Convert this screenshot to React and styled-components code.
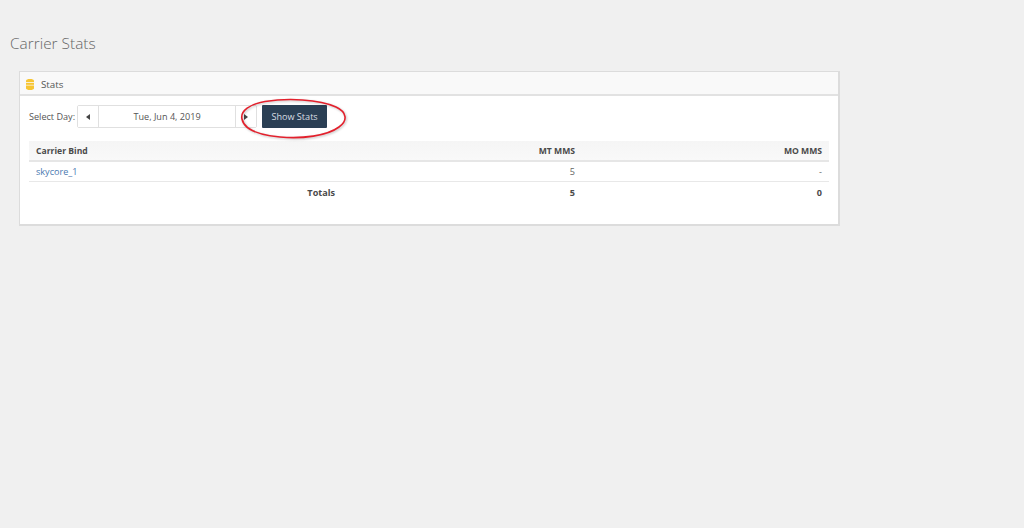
import React from 'react';
import styled, { createGlobalStyle } from 'styled-components';

const GlobalStyle = createGlobalStyle`
  html, body {
    margin: 0;
    height: 100%;
    background: #f0f0f0;
    font-family: "Open Sans", "Liberation Sans", sans-serif;
    font-size: 9.1px;
    color: #555;
    overflow: hidden;
  }
`;

const Page = styled.div`
  padding: 34px 0 0 10px;
`;

const PageTitle = styled.h1`
  margin: 0 0 17px;
  font-size: 15.4px;
  line-height: 20px;
  font-weight: 300;
  color: #666;
`;

const Panel = styled.section`
  position: relative;
  width: 818px;
  margin-left: 9px;
  height: 152px;
  background: #fff;
  border: 2px solid #dcdcdc;
  border-width: 1px 2px 2px 1px;
  box-sizing: content-box;
`;

const PanelHeader = styled.header`
  display: flex;
  align-items: center;
  gap: 7px;
  height: 20px;
  padding: 2px 0 0 6px;
  box-sizing: content-box;
  background: #f9f9f9;
  border-bottom: 2px solid #e2e2e2;
  font-size: 9.8px;
  color: #555;
`;

const PanelBody = styled.div`
  padding: 9px 9px 0;
`;

const Toolbar = styled.div`
  display: flex;
  align-items: center;
  height: 23px;
`;

const FieldLabel = styled.label`
  margin-right: 2px;
  color: #555;
`;

const DatePicker = styled.div`
  display: flex;
  height: 21px;
  border: 1px solid #e0e0e0;
  border-radius: 2px;
  margin-right: 5px;
`;

const Arrow = styled.button`
  display: flex;
  align-items: center;
  justify-content: center;
  width: 21px;
  padding: 0;
  background: #fff;
  border: 0;
  border-${p => (p.$side === 'left' ? 'right' : 'left')}: 1px solid #e0e0e0;
`;

const DateValue = styled.div`
  width: 136px;
  text-align: center;
  line-height: 21px;
  color: #555;
`;

const Button = styled.button`
  width: 65px;
  height: 23px;
  padding: 0;
  background: #2a3f54;
  border: 0;
  border-radius: 1px;
  font: inherit;
  color: #d8dde2;
`;

const Annotation = styled.svg`
  position: absolute;
  left: 221px;
  top: 27px;
  overflow: visible;
  filter: drop-shadow(1px 1px 1px rgba(0, 0, 0, 0.25));
`;

const Table = styled.table`
  width: 800px;
  margin-top: 13px;
  border-collapse: collapse;
  table-layout: fixed;
`;

const Column = styled.col`
  width: ${p => p.$width}px;
`;

const HeadCell = styled.th`
  height: 19px;
  padding: 0 7px;
  background: linear-gradient(#f5f5f5, #f9f9f9);
  border-bottom: 2px solid #e6e6e6;
  font-size: 8.6px;
  font-weight: 700;
  color: #4a4a4a;
  text-align: ${p => p.$align || 'left'};
`;

const Cell = styled.td`
  height: ${p => (p.$total ? 21 : 19)}px;
  padding: 0 7px;
  border-bottom: 1px solid ${p => (p.$total ? 'transparent' : '#e8e8e8')};
  font-weight: ${p => (p.$total ? 700 : 400)};
  color: ${p => (p.$total ? '#4a4a4a' : '#666')};
  text-align: ${p => p.$align || 'left'};
`;

const CarrierLink = styled.a`
  color: #4a78b0;
  text-decoration: none;
`;

const DatabaseIcon = () => (
  <svg width="8" height="11" viewBox="0 0 8 11">
    <path d="M0 1.5C0 .6 1.8 0 4 0s4 .6 4 1.5V3H0z" fill="#f7c531" />
    <path d="M0 3.8h8v2H0z" fill="#f7c531" />
    <path d="M0 6.6h8v2.9C8 10.4 6.2 11 4 11s-4-.6-4-1.5z" fill="#f7c531" />
  </svg>
);

const Triangle = ({ left }) => (
  <svg width="4" height="6" viewBox="0 0 4 6">
    <path d={left ? 'M4 0v6L0 3z' : 'M0 0v6l4-3z'} fill="#444" />
  </svg>
);

const App = () => (
  <>
    <GlobalStyle />
    <Page>
      <PageTitle>Carrier Stats</PageTitle>
      <Panel>
        <PanelHeader>
          <DatabaseIcon />
          <span>Stats</span>
        </PanelHeader>
        <PanelBody>
          <Toolbar>
            <FieldLabel>Select Day:</FieldLabel>
            <DatePicker>
              <Arrow $side="left"><Triangle left /></Arrow>
              <DateValue>Tue, Jun 4, 2019</DateValue>
              <Arrow $side="right"><Triangle /></Arrow>
            </DatePicker>
            <Button>Show Stats</Button>
          </Toolbar>
          <Table>
            <colgroup>
              <Column $width={313} />
              <Column $width={240} />
              <Column $width={247} />
            </colgroup>
            <thead>
              <tr>
                <HeadCell>Carrier Bind</HeadCell>
                <HeadCell $align="right">MT MMS</HeadCell>
                <HeadCell $align="right">MO MMS</HeadCell>
              </tr>
            </thead>
            <tbody>
              <tr>
                <Cell><CarrierLink href="#">skycore_1</CarrierLink></Cell>
                <Cell $align="right">5</Cell>
                <Cell $align="right">-</Cell>
              </tr>
              <tr>
                <Cell $total $align="right">Totals</Cell>
                <Cell $total $align="right">5</Cell>
                <Cell $total $align="right">0</Cell>
              </tr>
            </tbody>
          </Table>
        </PanelBody>
        <Annotation width="106" height="40" viewBox="0 0 106 40">
          <path
            d="M24 2.5C46 -1 78 0 95 8c11 5 12 14 3 20-12 9-37 12-59 10C18 36 3 30 1 20 -1 12 9 5 24 2.5z"
            fill="none"
            stroke="#e3202c"
            strokeWidth="1.6"
          />
        </Annotation>
      </Panel>
    </Page>
  </>
);

export default App;
